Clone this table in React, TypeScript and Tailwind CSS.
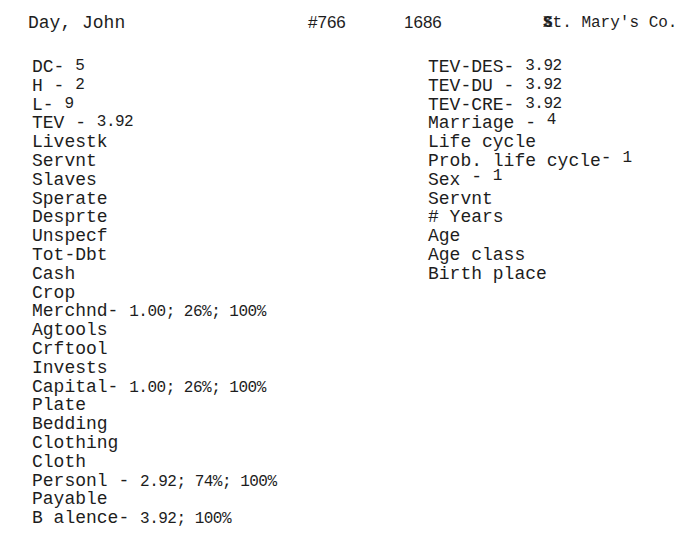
import type { ReactNode } from "react";

// typed inventory card: letters in pica mono, figures from a second machine
const mono = "font-['Liberation_Mono','DejaVu_Sans_Mono',monospace]";

function Num({ children, up = "-top-[2px]" }: { children: ReactNode; up?: string }) {
  return (
    <span className={`relative ${up} font-['Liberation_Mono',monospace] text-[16px] leading-none tracking-[-0.5px]`}>
      {children}
    </span>
  );
}

function Line({ children }: { children: ReactNode }) {
  return <div className="h-[18.8px] whitespace-pre">{children}</div>;
}

const leftRows: ReactNode[] = [
  <>DC- <Num>5</Num></>,
  <>H - <Num>2</Num></>,
  <>L- <Num>9</Num></>,
  <>TEV - <Num>3.92</Num></>,
  "Livestk",
  "Servnt",
  "Slaves",
  "Sperate",
  "Desprte",
  "Unspecf",
  "Tot-Dbt",
  "Cash",
  "Crop",
  <>Merchnd- <Num up="top-0">1.00; 26%; 100%</Num></>,
  "Agtools",
  "Crftool",
  "Invests",
  <>Capital- <Num up="top-0">1.00; 26%; 100%</Num></>,
  "Plate",
  "Bedding",
  "Clothing",
  "Cloth",
  <>Personl - <Num up="top-0">2.92; 74%; 100%</Num></>,
  "Payable",
  <>B alence- <Num up="top-0">3.92; 100%</Num></>,
];

const rightRows: ReactNode[] = [
  <>TEV-DES- <Num>3.92</Num></>,
  <>TEV-DU - <Num>3.92</Num></>,
  <>TEV-CRE- <Num>3.92</Num></>,
  <>Marriage - <Num up="-top-[4px]">4</Num></>,
  "Life cycle",
  <>Prob. life cycle<span className="relative -top-[3px] leading-none">-</span> <Num up="-top-[4px]">1</Num></>,
  <>Sex <span className="relative -top-[3px] leading-none">-</span> <Num up="-top-[5px]">1</Num></>,
  "Servnt",
  "# Years",
  "Age",
  "Age class",
  "Birth place",
];

export default function App() {
  return (
    <div className={`w-[700px] h-[534px] bg-white text-[#1d1d1d] text-[18px] leading-[18.8px] ${mono} overflow-hidden`}>
      {/* header */}
      <div className="flex items-start pt-[14px] pl-[28px] h-[33px]">
        <div className="w-[280px] whitespace-pre">Day, John</div>
        <div className="w-[96px] font-['Liberation_Sans',Arial,sans-serif] text-[17px]">#766</div>
        <div className="w-[139px] font-['Liberation_Sans',Arial,sans-serif] text-[17px]">1686</div>
        <div className="whitespace-pre text-[16px]">
          <span className="relative font-bold">
            S
            <span className="absolute left-0 top-0 font-bold opacity-70">X</span>
          </span>
          t. Mary's Co.
        </div>
      </div>

      {/* body */}
      <div className="flex pl-[32px] mt-[25px]">
        <div className="w-[396px]">
          {leftRows.map((r, i) => (
            <Line key={i}>{r}</Line>
          ))}
        </div>
        <div>
          {rightRows.map((r, i) => (
            <Line key={i}>{r}</Line>
          ))}
        </div>
      </div>
    </div>
  );
}
